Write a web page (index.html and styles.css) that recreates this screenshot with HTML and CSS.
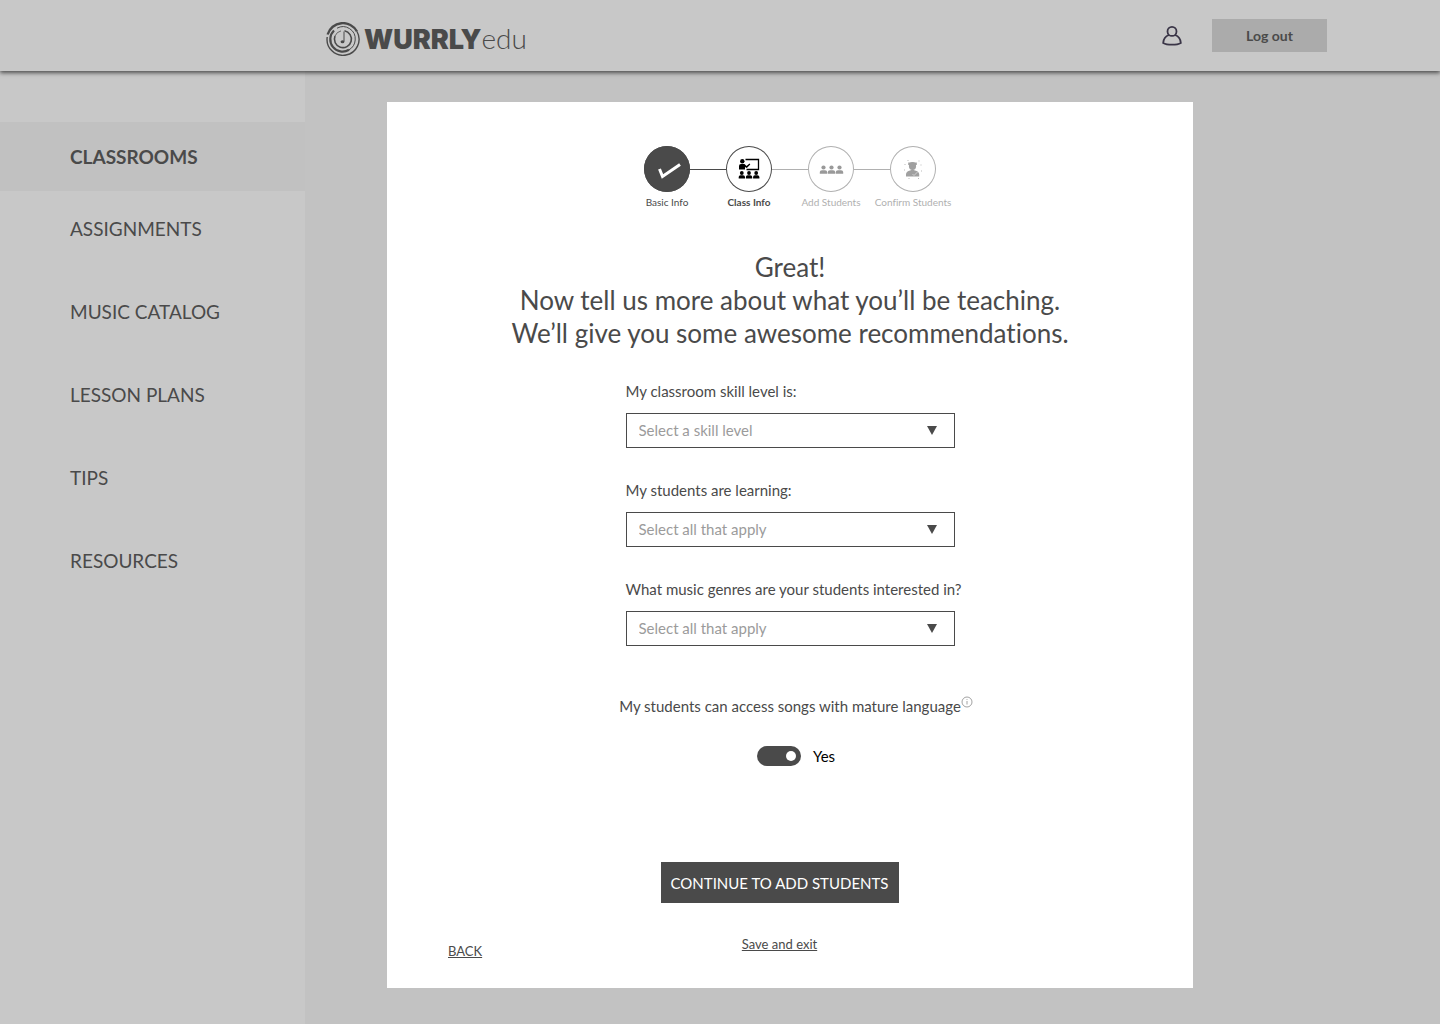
FILE: index.html
```
<!DOCTYPE html>
<html lang="en">
<head>
    <meta charset="UTF-8">
    <meta name="viewport" content="width=device-width, initial-scale=1.0">
    <title>WURRLYedu - Class Info</title>
    <link rel="stylesheet" href="styles.css">
</head>
<body>
    <header class="header">
        <a href="#" class="logo">
            <svg class="logo-icon" viewBox="0 0 34 34" fill="none" stroke="currentColor">
                <path d="M1.6 12.5A16 16 0 0 1 31 9.500" stroke-width="2.400"/>
                <path d="M31 9.500A16 16 0 1 1 1.200 15" stroke-width="1.400"/>
                <path d="M11 6.200A12.300 12.300 0 0 1 29.200 18" stroke-width="1"/>
                <path d="M29.200 18A12.300 12.300 0 0 1 23 27.800" stroke-width="1"/>
                <path d="M23 27.800A12.300 12.300 0 0 1 8 8.500" stroke-width="2.200"/>
                <path d="M18.500 8.800A8.500 8.500 0 1 1 9 14" stroke-width="1.600"/>
                <path d="M9 14A8.500 8.500 0 0 1 15 8.900" stroke-width="0.800"/>
                <path d="M18 19.500V9.500" stroke-width="1"/>
                <ellipse cx="16.500" cy="19.800" rx="1.900" ry="1.500" fill="currentColor" stroke="none"/>
            </svg>
            <span class="logo-text">WURRLY<span class="logo-edu">edu</span></span>
        </a>
        <div class="header-actions">
            <a href="#" class="profile" aria-label="Profile">
                <svg viewBox="0 0 20 20" fill="none" stroke="currentColor" stroke-width="1.800">
                    <circle cx="10" cy="5.400" r="4.500"/>
                    <path d="M7 9C3.600 10.200 1.400 13.200 1.200 16.900C5 19.200 15 19.200 18.800 16.900C18.600 13.200 16.400 10.200 13 9"/>
                </svg>
            </a>
            <button type="button" class="logout">Log out</button>
        </div>
    </header>

    <div class="layout">
        <nav class="sidebar">
            <ul>
                <li><a href="#" class="active">CLASSROOMS</a></li>
                <li><a href="#">ASSIGNMENTS</a></li>
                <li><a href="#">MUSIC CATALOG</a></li>
                <li><a href="#">LESSON PLANS</a></li>
                <li><a href="#">TIPS</a></li>
                <li><a href="#">RESOURCES</a></li>
            </ul>
        </nav>

        <main class="content">
            <form class="card">
                <ol class="steps">
                    <li class="step done">
                        <div class="step-row">
                            <span class="step-circle">
                                <svg viewBox="0 0 46 46" fill="none" stroke="#fff" stroke-width="3">
                                    <path d="M15.500 23L18.500 30.500L36 18.500"/>
                                </svg>
                            </span>
                        </div>
                        <span class="step-label">Basic Info</span>
                    </li>
                    <li class="step current">
                        <div class="step-row">
                            <span class="step-circle">
                                <svg viewBox="0 0 46 46" fill="#000">
                                    <circle cx="16.300" cy="15.300" r="2.200"/>
                                    <path d="M13 23.500V20Q13 18 15 18H18.500L20.500 20L23.500 17.500L24.300 18.500L20.800 22L19 21V23.500Z"/>
                                    <path d="M19.500 13.500H32.500V23.500H20.500" fill="none" stroke="#000" stroke-width="1.300"/>
                                    <circle cx="15.800" cy="27" r="1.900"/>
                                    <circle cx="23" cy="27" r="1.900"/>
                                    <circle cx="30.200" cy="27" r="1.900"/>
                                    <path d="M12.700 32.500V31Q12.700 29.300 14.500 29.300H17Q19 29.300 19 31V32.500ZM19.900 32.500V31Q19.900 29.300 21.700 29.300H24.200Q26.200 29.300 26.200 31V32.500ZM27.100 32.500V31Q27.100 29.300 28.900 29.300H31.400Q33.400 29.300 33.400 31V32.500Z"/>
                                </svg>
                            </span>
                        </div>
                        <span class="step-label">Class Info</span>
                    </li>
                    <li class="step">
                        <div class="step-row">
                            <span class="step-circle">
                                <svg viewBox="0 0 46 46" fill="#999">
                                    <circle cx="15.500" cy="21.500" r="2.100"/>
                                    <circle cx="23.500" cy="21.500" r="2.100"/>
                                    <circle cx="31.500" cy="21.500" r="2.100"/>
                                    <path d="M11.800 27.800V26Q11.800 24.300 14 24.300H17Q19.200 24.300 19.200 26V27.800ZM19.800 27.800V26Q19.800 24.300 22 24.300H25Q27.200 24.300 27.200 26V27.800ZM27.800 27.800V26Q27.800 24.300 30 24.300H33Q35.200 24.300 35.200 26V27.800Z"/>
                                </svg>
                            </span>
                        </div>
                        <span class="step-label">Add Students</span>
                    </li>
                    <li class="step">
                        <div class="step-row">
                            <span class="step-circle">
                                <svg viewBox="0 0 46 46" fill="#a0a0a0">
                                    <ellipse cx="22.500" cy="20" rx="3.600" ry="3.900"/>
                                    <path d="M18.200 16.500H26.800V19H18.200Z"/>
                                    <path d="M16 30.500V28Q16.500 25 20 24.500L22.500 23.500L25 24.500Q28.700 25 29.200 28V30.500Z"/>
                                    <path d="M22.500 28L24 29.500L27.500 26" fill="none" stroke="#ddd" stroke-width="0.800"/>
                                    <path d="M17.500 14.500H18.500M28.500 15H29.500M14.500 18.500H15.500M30.500 19H31.500M14 24H15M31 25H32M18.500 32.500H19.500M28 32.500H29" stroke="#bbb" stroke-width="1"/>
                                </svg>
                            </span>
                        </div>
                        <span class="step-label">Confirm Students</span>
                    </li>
                </ol>

                <h1>Great!<br>Now tell us more about what you’ll be teaching.<br>We’ll give you some awesome recommendations.</h1>

                <div class="fields">
                    <div class="field">
                        <label for="skill">My classroom skill level is:</label>
                        <div class="select-box">
                            <select id="skill"><option>Select a skill level</option></select>
                            <svg viewBox="0 0 10 9" fill="currentColor"><path d="M0 0H10L5 9Z"/></svg>
                        </div>
                    </div>
                    <div class="field">
                        <label for="learning">My students are learning:</label>
                        <div class="select-box">
                            <select id="learning"><option>Select all that apply</option></select>
                            <svg viewBox="0 0 10 9" fill="currentColor"><path d="M0 0H10L5 9Z"/></svg>
                        </div>
                    </div>
                    <div class="field">
                        <label for="genres">What music genres are your students interested in?</label>
                        <div class="select-box">
                            <select id="genres"><option>Select all that apply</option></select>
                            <svg viewBox="0 0 10 9" fill="currentColor"><path d="M0 0H10L5 9Z"/></svg>
                        </div>
                    </div>
                </div>

                <div class="mature">
                    <div class="mature-title">
                        <span id="matureTitle">My students can access songs with mature language</span>
                        <svg viewBox="0 0 12 12" fill="none" stroke="#8a8a8a" stroke-width="0.800">
                            <circle cx="6" cy="6" r="5"/>
                            <path d="M6 3.200V4M6 5V8.500"/>
                        </svg>
                    </div>
                    <div class="toggle-row">
                        <input type="checkbox" id="mature" class="toggle" aria-describedby="matureTitle" checked>
                        <label for="mature">Yes</label>
                    </div>
                </div>

                <div class="card-footer">
                    <a href="#" class="back">BACK</a>
                    <div class="card-actions">
                        <button type="submit" class="continue">CONTINUE TO ADD STUDENTS</button>
                        <a href="#">Save and exit</a>
                    </div>
                </div>
            </form>
        </main>
    </div>
</body>
</html>
```
FILE: styles.css
```
* {
    box-sizing: border-box;
}
body {
    font-family: Lato, "Liberation Sans", sans-serif;
    font-size: 15px;
    font-variant-ligatures: none;
    line-height: 20px;
    color: #4a4a4a;
    background: #c2c2c2;
    margin: 0;
    min-height: 100vh;
    display: flex;
    flex-direction: column;
}
a {
    color: inherit;
}
ul, ol {
    list-style: none;
    margin: 0;
    padding: 0;
}

/* header */
.header {
    display: flex;
    justify-content: space-between;
    padding: 19px 113px 19px 326px;
    background: #c8c8c8;
    box-shadow: 0 2px 4px rgba(0, 0, 0, 0.6);
    z-index: 1;
}
.logo {
    display: flex;
    align-items: center;
    gap: 4px;
    height: 33px;
    padding-top: 6px;
    text-decoration: none;
}
.logo-icon {
    width: 34px;
    height: 34px;
}
.logo-text {
    font-family: Inter, sans-serif;
    font-size: 27px;
    font-weight: 900;
    line-height: 32px;
}
.logo-edu {
    font-family: Lato, sans-serif;
    font-size: 28px;
    font-weight: 300;
}
.header-actions {
    display: flex;
    align-items: center;
    gap: 30px;
}
.profile {
    color: #3a3547;
}
.profile svg {
    display: block;
    width: 20px;
    height: 20px;
}
.logout {
    width: 115px;
    height: 33px;
    border: none;
    background: #ababab;
    color: #4a4a4a;
    font-family: inherit;
    font-size: 14px;
    font-weight: 700;
    cursor: pointer;
}

.layout {
    display: flex;
    flex: 1;
}

/* sidebar */
.sidebar {
    width: 305px;
    flex-shrink: 0;
    padding-top: 51px;
    background: #c8c8c8;
}
.sidebar a {
    display: block;
    padding: 26px 20px 33px 70px;
    font-size: 19px;
    line-height: 24px;
    text-decoration: none;
}
.sidebar a.active {
    padding-top: 23px;
    padding-bottom: 22px;
    background: #c1c1c1;
    font-weight: 700;
}

/* card */
.content {
    flex: 1;
    padding: 31px 247px 36px 82px;
}
.card {
    display: flex;
    flex-direction: column;
    align-items: center;
    min-height: 100%;
    padding: 44px 0 28px;
    background: #fff;
}

.steps {
    display: grid;
    grid-template-columns: repeat(4, 82px);
}
.step {
    display: flex;
    flex-direction: column;
    align-items: center;
    color: #b0b0b0;
}
.step-row {
    display: flex;
    align-items: center;
    align-self: stretch;
}
.step-row::before,
.step-row::after {
    content: "";
    flex: 1;
    height: 1px;
    background: #b0b0b0;
}
.step:first-child .step-row::before,
.step:last-child .step-row::after {
    background: none;
}
.step.done .step-row::after,
.step.current .step-row::before {
    background: #4a4a4a;
}
.step-circle {
    width: 46px;
    height: 46px;
    border-radius: 50%;
    box-shadow: inset 0 0 0 1px currentColor;
}
.step-circle svg {
    display: block;
}
.step.done,
.step.current {
    color: #4a4a4a;
}
.step.done .step-circle {
    background: #4a4a4a;
}
.step-label {
    font-size: 10px;
    line-height: 20px;
    white-space: nowrap;
}
.step.current .step-label {
    font-weight: 700;
}

h1 {
    margin: 39px 0 31px;
    font-size: 26px;
    font-weight: 400;
    line-height: 33px;
    text-align: center;
}

.fields {
    width: 329px;
    display: flex;
    flex-direction: column;
    gap: 32px;
}
.field {
    display: flex;
    flex-direction: column;
    gap: 12px;
}
.field label {
    white-space: nowrap;
}
.select-box {
    display: grid;
    align-items: center;
}
.select-box select,
.select-box svg {
    grid-area: 1 / 1;
}
.select-box select {
    appearance: none;
    height: 35px;
    padding: 0 12px 2px;
    border: 1px solid #4a4a4a;
    border-radius: 0;
    background: #fff;
    color: #9b9b9b;
    font-family: inherit;
    font-size: 15px;
}
.select-box svg {
    width: 10px;
    height: 9px;
    margin-right: 18px;
    justify-self: end;
    pointer-events: none;
}

.mature {
    display: flex;
    flex-direction: column;
    align-items: center;
    gap: 30px;
    margin-top: 50px;
    padding-left: 12px;
}
.mature-title {
    display: flex;
}
.mature-title svg {
    width: 12px;
    height: 12px;
}
.toggle-row {
    display: flex;
    align-items: center;
    gap: 12px;
    color: #000;
}
.toggle {
    appearance: none;
    display: flex;
    width: 44px;
    height: 20px;
    margin: 0;
    padding: 5px;
    border-radius: 10px;
    background: #9b9b9b;
    cursor: pointer;
}
.toggle::before {
    content: "";
    width: 10px;
    height: 10px;
    border-radius: 50%;
    background: #fff;
}
.toggle:checked {
    justify-content: flex-end;
    background: #4a4a4a;
}

.card-footer {
    display: grid;
    grid-template-columns: 1fr auto 1fr;
    align-items: end;
    align-self: stretch;
    margin-top: auto;
    padding: 0 82px 0 61px;
    font-size: 13px;
    line-height: 18px;
}
.card-actions {
    display: flex;
    flex-direction: column;
    align-items: center;
    gap: 32px;
    padding-bottom: 7px;
}
.continue {
    width: 238px;
    height: 41px;
    border: none;
    background: #4a4a4a;
    color: #fff;
    font-family: inherit;
    font-size: 15px;
    cursor: pointer;
}
```
